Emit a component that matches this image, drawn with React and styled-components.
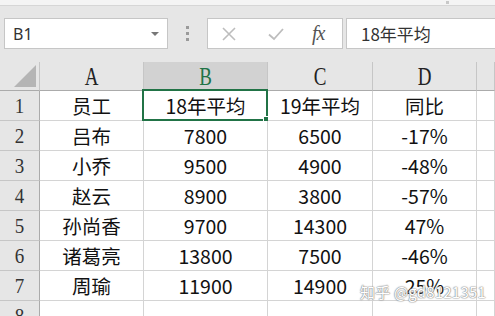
import React from 'react';
import styled, { createGlobalStyle } from 'styled-components';

const GlobalStyle = createGlobalStyle`
  html, body { margin: 0; padding: 0; background: #e6e6e6; overflow: hidden; }
  body { font-family: "Noto Sans CJK SC", "Noto Sans", sans-serif; }
`;

const GREEN = '#217346';

const Page = styled.div`
  width: 495px;
  height: 316px;
  position: relative;
  overflow: hidden;
  background: #e6e6e6;
`;

const TopStrip = styled.div`
  height: 5px;
  background: #f4f4f4;
  border-bottom: 1px solid #d6d6d6;
  position: relative;
  &::after {
    content: '';
    position: absolute;
    left: 446px;
    top: 1px;
    width: 3px;
    height: 3px;
    background: #c8c8c8;
  }
`;

const Toolbar = styled.div`
  display: flex;
  align-items: center;
  height: 31px;
  padding: 12px 0 0 4px;
`;

const NameBox = styled.div`
  box-sizing: border-box;
  width: 164px;
  height: 31px;
  background: #fff;
  border: 1px solid #c6c6c6;
  display: flex;
  align-items: center;
  justify-content: space-between;
  padding: 0 8px 0 8px;
  font-family: "Noto Sans", "Liberation Sans", sans-serif;
  font-size: 16px;
  color: #333;
`;

const Caret = styled.span`
  width: 0;
  height: 0;
  border-left: 4px solid transparent;
  border-right: 4px solid transparent;
  border-top: 4px solid #777;
  margin-top: 1px;
`;

const Grip = styled.div`
  width: 39px;
  display: flex;
  flex-direction: column;
  align-items: center;
  gap: 3px;
  span {
    width: 3px;
    height: 3px;
    background: #9a9a9a;
  }
`;

const FxBox = styled.div`
  box-sizing: border-box;
  width: 136px;
  height: 31px;
  background: #fff;
  border: 1px solid #c6c6c6;
  display: flex;
  align-items: center;
  padding-left: 13px;
`;

const ToolIcon = styled.span`
  width: ${p => p.w}px;
  display: flex;
  align-items: center;
`;

const Fx = styled.span`
  font-family: "Liberation Serif", serif;
  font-style: italic;
  font-size: 20px;
  color: #555;
  letter-spacing: -1px;
`;

const FormulaInput = styled.div`
  box-sizing: border-box;
  flex: 1;
  height: 31px;
  margin-left: 3px;
  background: #fff;
  border: 1px solid #c6c6c6;
  border-right: none;
  display: flex;
  align-items: center;
  padding-left: 14px;
  font-size: 17px;
  color: #333;
`;

const Sheet = styled.div`
  margin-top: 13px;
  display: grid;
  grid-template-columns: 40px 104px 124px 105px 104px 1fr;
  grid-template-rows: 29px repeat(7, 30px) 30px;
  background: #fff;
`;

const Corner = styled.div`
  background: #e6e6e6;
  border-right: 1px solid #c6c6c6;
  border-bottom: 1px solid #ababab;
  position: relative;
  svg { position: absolute; right: 3px; bottom: 3px; }
`;

const ColHead = styled.div`
  background: ${p => (p.active ? '#d2d2d2' : '#e6e6e6')};
  color: ${p => (p.active ? GREEN : '#222')};
  border-right: 1px solid #c6c6c6;
  border-bottom: 1px solid #ababab;
  display: flex;
  align-items: center;
  justify-content: center;
  font-family: "Liberation Serif", serif;
  font-size: 19px;
  span { display: inline-block; transform: scaleY(1.3); margin-top: 2px; }
`;

const RowHead = styled.div`
  background: #e6e6e6;
  color: #333;
  border-right: 1px solid #ababab;
  border-bottom: 1px solid #c6c6c6;
  display: flex;
  align-items: center;
  justify-content: center;
  font-family: "Liberation Serif", serif;
  font-size: 19px;
  span { display: inline-block; transform: scaleY(1.15); }
`;

const Cell = styled.div`
  background: #fff;
  border-right: 1px solid #d4d4d4;
  border-bottom: 1px solid #d4d4d4;
  display: flex;
  align-items: center;
  justify-content: center;
  font-size: 19.5px;
  color: #111;
  position: relative;
  ${p => p.selected && `
    &::before {
      content: '';
      position: absolute;
      left: -2px; top: -2px; right: -1px; bottom: -1px;
      border: 2px solid ${GREEN};
    }
    &::after {
      content: '';
      position: absolute;
      right: -3px; bottom: -3px;
      width: 5px; height: 5px;
      background: ${GREEN};
      border: 1px solid #fff;
    }
  `}
`;

const Watermark = styled.div`
  position: absolute;
  left: 360px;
  top: 281px;
  font-size: 15px;
  color: #fff;
  letter-spacing: 0.2px;
  text-shadow: 0 0 1px #888, 0 0 1px #888, 0 0 2px #999;
`;

const rows = [
  ['员工', '18年平均', '19年平均', '同比'],
  ['吕布', '7800', '6500', '-17%'],
  ['小乔', '9500', '4900', '-48%'],
  ['赵云', '8900', '3800', '-57%'],
  ['孙尚香', '9700', '14300', '47%'],
  ['诸葛亮', '13800', '7500', '-46%'],
  ['周瑜', '11900', '14900', '25%'],
  ['', '', '', ''],
];

const XIcon = () => (
  <svg width="16" height="16" viewBox="0 0 16 16">
    <path d="M2 2 L14 14 M14 2 L2 14" stroke="#bdbdbd" strokeWidth="1.6" fill="none" />
  </svg>
);

const CheckIcon = () => (
  <svg width="18" height="16" viewBox="0 0 18 16">
    <path d="M2 8.5 L7 13 L16 3" stroke="#bdbdbd" strokeWidth="1.8" fill="none" />
  </svg>
);

export default function App() {
  return (
    <Page>
      <GlobalStyle />
      <TopStrip />
      <Toolbar>
        <NameBox>
          <span>B1</span>
          <Caret />
        </NameBox>
        <Grip><span /><span /><span /></Grip>
        <FxBox>
          <ToolIcon w={46}><XIcon /></ToolIcon>
          <ToolIcon w={45}><CheckIcon /></ToolIcon>
          <Fx>fx</Fx>
        </FxBox>
        <FormulaInput>18年平均</FormulaInput>
      </Toolbar>
      <Sheet>
        <Corner>
          <svg width="22" height="22" viewBox="0 0 22 22">
            <polygon points="22,0 22,22 0,22" fill="#b5b5b5" />
          </svg>
        </Corner>
        {['A', 'B', 'C', 'D', ''].map((c, i) => (
          <ColHead key={i} active={c === 'B'}><span>{c}</span></ColHead>
        ))}
        {rows.map((r, ri) => (
          <React.Fragment key={ri}>
            <RowHead><span>{ri + 1}</span></RowHead>
            {r.map((v, ci) => (
              <Cell key={ci} selected={ri === 0 && ci === 1}>{v}</Cell>
            ))}
            <Cell />
          </React.Fragment>
        ))}
      </Sheet>
      <Watermark>知乎 @gd8121351</Watermark>
    </Page>
  );
}
